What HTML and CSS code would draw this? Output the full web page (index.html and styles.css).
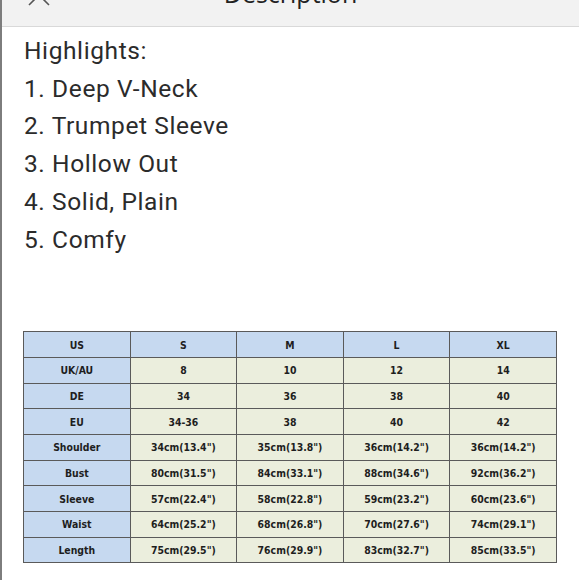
FILE: index.html
```html
<!DOCTYPE html>
<html>
<head>
<meta charset="utf-8">
<link rel="stylesheet" href="styles.css">
</head>
<body>
<div class="frame">
  <header class="topbar">
    <div class="close">
      <svg width="22" height="22" viewBox="0 0 22 22"><path d="M1 1 L21 21 M21 1 L1 21" stroke="#555" stroke-width="1.6" fill="none"/></svg>
    </div>
    <div class="title">Description</div>
    <div></div>
  </header>
  <main class="content">
    <div class="highlights">
      <p>Highlights:</p>
      <p>1. Deep V-Neck</p>
      <p>2. Trumpet Sleeve</p>
      <p>3. Hollow Out</p>
      <p>4. Solid, Plain</p>
      <p>5. Comfy</p>
    </div>
    <table class="sizes">
      <tr><th>US</th><th>S</th><th>M</th><th>L</th><th>XL</th></tr>
      <tr><th>UK/AU</th><td>8</td><td>10</td><td>12</td><td>14</td></tr>
      <tr><th>DE</th><td>34</td><td>36</td><td>38</td><td>40</td></tr>
      <tr><th>EU</th><td>34-36</td><td>38</td><td>40</td><td>42</td></tr>
      <tr><th>Shoulder</th><td>34cm(13.4")</td><td>35cm(13.8")</td><td>36cm(14.2")</td><td>36cm(14.2")</td></tr>
      <tr><th>Bust</th><td>80cm(31.5")</td><td>84cm(33.1")</td><td>88cm(34.6")</td><td>92cm(36.2")</td></tr>
      <tr><th>Sleeve</th><td>57cm(22.4")</td><td>58cm(22.8")</td><td>59cm(23.2")</td><td>60cm(23.6")</td></tr>
      <tr><th>Waist</th><td>64cm(25.2")</td><td>68cm(26.8")</td><td>70cm(27.6")</td><td>74cm(29.1")</td></tr>
      <tr><th>Length</th><td>75cm(29.5")</td><td>76cm(29.9")</td><td>83cm(32.7")</td><td>85cm(33.5")</td></tr>
    </table>
  </main>
</div>
</body>
</html>
```
FILE: styles.css
```css
html, body {
  margin: 0;
  padding: 0;
  background: #fff;
}
body {
  width: 580px;
  height: 580px;
  overflow: hidden;
}
.frame {
  border-left: 2px solid #7d7d7d;
  height: 580px;
  box-sizing: border-box;
}
.topbar {
  height: 26px;
  background: #f2f2f2;
  border-bottom: 1px solid #d9d9d9;
  display: grid;
  grid-template-columns: 1fr auto 1fr;
  overflow: hidden;
  margin-right: 1px;
}
.close {
  padding-left: 26px;
  margin-top: -16px;
}
.close svg {
  display: block;
}
.title {
  font-family: "Open Sans", sans-serif;
  font-size: 25px;
  line-height: 26px;
  color: #222;
  margin-top: -20px;
}
.content {
  padding: 5px 0 0 22px;
}
.highlights {
  font-family: Roboto, sans-serif;
  font-size: 24.5px;
  letter-spacing: 0.6px;
  line-height: 37.7px;
  color: #2b2b2b;
}
.highlights p {
  margin: 0;
}
.sizes {
  margin-top: 73px;
  margin-left: -1px;
  width: 534px;
  table-layout: fixed;
  border-collapse: collapse;
  font-family: "DejaVu Sans Condensed", "DejaVu Sans", sans-serif;
  font-stretch: condensed;
  font-weight: bold;
  font-size: 10.4px;
  color: #1e1e1e;
}
.sizes tr {
  height: 25.7px;
}
.sizes th, .sizes td {
  border: 1px solid #5a5a5a;
  padding: 0;
  text-align: center;
  vertical-align: middle;
  background: #ebeedd;
}
.sizes th, .sizes tr:first-child th {
  background: #c6d9f0;
}
```
